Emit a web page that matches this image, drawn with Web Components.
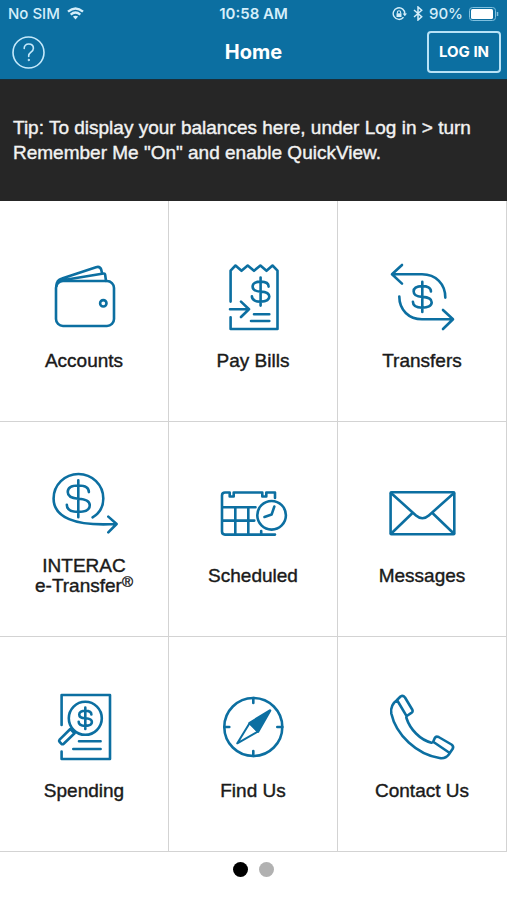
<!DOCTYPE html>
<html lang="en">
<head>
<meta charset="utf-8">
<meta name="viewport" content="width=device-width, initial-scale=1">
<title>Home</title>
<style>
  body { margin: 0; background: #fff; font-family: "Liberation Sans", Arial, sans-serif; color: #1a1a1a; --brand: #0c6fa1; --line: #d3d3d3; }
</style>
</head>
<body>
<bank-app></bank-app>
<script>
const define = (name, html) => {
  const template = document.createElement('template');
  template.innerHTML = html;
  customElements.define(name, class extends HTMLElement {
    constructor() {
      super();
      this.attachShadow({ mode: 'open' }).append(template.content.cloneNode(true));
    }
  });
};

define('status-bar', `
  <style>
    :host { display: grid; grid-template-columns: 1fr auto 1fr; align-items: center; height: 27px; padding: 0 8px; font: 500 15px/18px Inter, sans-serif; color: #d5eefa; }
    div { display: flex; align-items: center; gap: 7px; }
    .end { justify-content: flex-end; gap: 6px; }
    time { font-weight: 600; }
    svg { display: block; fill: none; stroke: currentColor; }
  </style>
  <div><span>No SIM</span>
    <svg width="17" height="13" viewBox="0 0 17 13" stroke-width="2.4" aria-label="Wi-Fi"><path d="M1 4.7Q8.500-1.700 16 4.700M3.700 7.600Q8.500 3.600 13.300 7.600"/><path d="M5.900 9.600Q8.500 7.800 11.100 9.600L8.500 12.500Z" fill="currentColor" stroke="none"/></svg>
  </div>
  <time>10:58 AM</time>
  <div class="end">
    <svg width="15" height="14" viewBox="0 0 15 14" stroke-width="1.400" aria-label="Rotation lock"><path d="M11.500 10.300A5.800 5.800 0 1 1 12.800 7"/><path d="M10.600 6.500h4.400l-2.200 2.800z" fill="currentColor" stroke="none"/><rect x="4.500" y="6.300" width="5" height="3.700" fill="currentColor" stroke="none"/><path d="M5.400 6.500V5.300a1.600 1.600 0 0 1 3.200 0V6.500" stroke-width="1.100"/></svg>
    <svg width="10" height="15" viewBox="0 0 10 15" stroke-width="1.500" aria-label="Bluetooth"><path d="M1 4L8.700 10.700L5 14V1L8.700 4.300L1 11"/></svg>
    <span>90%</span>
    <svg width="30" height="14" viewBox="0 0 30 14" aria-label="Battery"><rect x=".5" y=".5" width="26" height="13" rx="3" stroke="#7fc0df"/><rect x="2" y="2" width="22" height="10" rx="1.500" fill="#fff" stroke="none"/><path d="M28.500 5v4" stroke="#7fc0df" stroke-width="1.500"/></svg>
  </div>`);

define('nav-bar', `
  <style>
    :host { display: grid; grid-template-columns: 1fr auto 1fr; align-items: center; height: 50px; padding: 0 6px 2px; color: #fff; }
    h1 { margin: 0; font: 700 20px/24px Inter, sans-serif; }
    button { background: none; color: inherit; cursor: pointer; padding: 0; }
    .help { width: 33px; height: 33px; margin-left: 6px; border: 0; }
    .help svg { display: block; fill: none; stroke: #c4e9fb; stroke-linecap: round; }
    .login { justify-self: end; width: 74px; height: 42px; border: 2px solid #b8e2f6; border-radius: 4px; font: 700 15px/18px Inter, sans-serif; }
  </style>
  <button class="help" aria-label="Help"><svg width="33" height="33" viewBox="0 0 33 33"><circle cx="16.500" cy="16.500" r="15.500" stroke-width="1.600"/><path d="M12.200 12.500C12 9.800 14 8 16.700 8s4.700 1.700 4.700 4.300c0 4-4.700 3.800-4.700 7.500v.7" stroke-width="1.600"/><circle cx="16.700" cy="24" r=".7" fill="#c4e9fb"/></svg></button>
  <h1>Home</h1>
  <button class="login">LOG IN</button>`);

define('tip-banner', `
  <style>
    :host { display: flex; align-items: center; box-sizing: border-box; min-height: 122px; padding: 0 13px 2px; background: #262626; border-top: 1px solid #182e39; color: #f2f2f2; }
    p { margin: 0; font-size: 19px; line-height: 25px; -webkit-text-stroke: 0.4px; }
  </style>
  <p><slot></slot></p>`);

const dollar = (x, y, s) => `<g transform="translate(${x} ${y}) scale(${s})"><path d="M0-14V14M8-5C8-8.500 4.500-10 0-10S-8-8.500-8-5C-8-1.500-4.500-.2 0 0S8.700 1.500 8.700 5S5 10 0 10S-8.700 8.500-8.700 4.600"/></g>`;

const icons = {
  wallet: `<rect x="12" y="24" width="58" height="45" rx="7"/><circle cx="59.300" cy="46.300" r="3.200"/><path d="M12.500 29C12.500 25 14 22.500 18 21.500L52 10.200Q56 9 57.200 12.500L58 16M17 23.500L59.500 16.500Q61 16.200 61.200 18L62 24"/>`,
  bill: `<path d="M17.600 44.600V13.600L22.500 8.500L28.500 13.800L34.700 8.500L41 13.800L47.400 8.500L53.500 13.800L59.500 8.500L64.500 13.600V72H17.600V60.300M17 52.300H36M28 44.600L36 52.300L28 60M41 57.300H56.300M38 64H56.300"/>${dollar(47.600, 34.600, 1)}`,
  transfer: `<path d="M20 8L10 17.300L20 26.600M10.500 17.300H40C54 17.300 63.300 27 63.300 40.600M17.300 39.600C17.300 53 27 62.300 40 62.300H70.500M61 53L71 62.300L61 72"/>${dollar(40.300, 39.900, 1.080)}`,
  etransfer: `<path d="M48.600 45.300C56 41 59.300 34 59.300 26.500A24.850 24.500 0 1 0 9.600 26.500C9.600 45 30 54.500 72 52M64.300 44.600L72.600 52L64.300 60.300"/>${dollar(34.300, 26.700, 1.320)}`,
  calendar: `<path d="M62 26V20.500H53.300V24.500H49.300V20.500H20.700V24.500H16.700V20.500H12Q9 20.500 9 23.500V59.600Q9 62.600 12 62.600H62M9 35.300H42.500M9 48.600H41.300M22.300 35.300V62.600M35.300 35.300V62.600M48.200 59V62.600"/><circle cx="58.600" cy="43.300" r="14.300"/><path d="M61.300 34.600L58.600 42.600L51.500 45"/>`,
  envelope: `<rect x="8.600" y="20.300" width="63.700" height="42" rx="1"/><path d="M9 21L34 43.500Q40.400 49 46.800 43.500L72 21M30.500 41L9 61.800M50.400 41L72 61.800"/>`,
  spending: `<path d="M17.600 38V8H66V72H17.600V64.600M35 54.300H56.600M29.300 62H56.600"/><circle cx="41.300" cy="31.300" r="16.500"/><path d="M26.300 42L15.600 52.600Q14.600 53.800 15.700 55L17.300 56.700Q18.500 57.800 19.700 56.700L30.600 46.300Z"/>${dollar(41.300, 31.300, .76)}`,
  compass: `<circle cx="40.300" cy="40" r="29"/><path d="M40.300 11V16M40.300 64V69M11.300 40H16.300M64.300 40H69.300"/><path d="M36.700 36L24.300 56.300L45 44.500Z" stroke-width="2"/><path d="M57 23.600L36.700 36L40.800 40.200L45 44.500Z" fill="currentColor"/>`,
  phone: `<path d="M15 13L18.500 9.500Q21 8 23 10.500L30.200 22.500Q31.500 24.800 29 26.200L25.500 28.500Q23.800 29.500 24.600 31.500C28 42 38 53 49.500 55.700Q51 55.900 51.500 54L52.700 51.200Q54 48.800 56.600 50L69.500 57.500Q72 59.200 70.700 61.800L66.800 67.500Q63.500 72 57.500 71C35 67.500 14 48 9.300 26.500Q8 18 15 13L24.600 29.200M51.500 55L67 65.500"/>`
};

customElements.define('line-icon', class extends HTMLElement {
  constructor() { super(); this.attachShadow({ mode: 'open' }); }
  connectedCallback() {
    this.shadowRoot.innerHTML = `
      <style>
        :host { display: block; color: var(--brand); }
        svg { display: block; fill: none; stroke: currentColor; stroke-width: 2.600; stroke-linecap: round; stroke-linejoin: round; }
        path { vector-effect: non-scaling-stroke; }
      </style>
      <svg width="80" height="80" viewBox="0 0 80 80" aria-hidden="true">${icons[this.getAttribute('name')]}</svg>`;
  }
});

customElements.define('menu-tile', class extends HTMLElement {
  constructor() { super(); this.attachShadow({ mode: 'open' }); }
  connectedCallback() {
    this.shadowRoot.innerHTML = `
      <style>
        :host { display: block; border: solid var(--line); border-width: 0 1px 1px 0; }
        a { display: flex; flex-direction: column; align-items: center; height: 100%; box-sizing: border-box; padding: var(--tile-top, 50px) 4px 0; color: inherit; text-decoration: none; }
        span { display: flex; flex-direction: column; justify-content: center; height: 48px; text-align: center; font-size: 19px; line-height: 20px; -webkit-text-stroke: 0.4px; }
      </style>
      <a href="#${this.getAttribute('icon')}"><line-icon name="${this.getAttribute('icon')}"></line-icon><span><slot></slot></span></a>`;
  }
});

define('menu-grid', `
  <style>
    :host { display: grid; grid-template-columns: repeat(3, minmax(0, 1fr)); grid-template-rows: 221px 215px 215px; }
    .first { --tile-top: 56px; }
    sup { font-size: 15px; line-height: 0; vertical-align: 5px; }
    b { display: block; font-weight: inherit; white-space: nowrap; }
  </style>
  <menu-tile class="first" icon="wallet">Accounts</menu-tile>
  <menu-tile class="first" icon="bill">Pay Bills</menu-tile>
  <menu-tile class="first" icon="transfer">Transfers</menu-tile>
  <menu-tile icon="etransfer"><b>INTERAC</b><b>e-Transfer<sup>®</sup></b></menu-tile>
  <menu-tile icon="calendar">Scheduled</menu-tile>
  <menu-tile icon="envelope">Messages</menu-tile>
  <menu-tile icon="spending">Spending</menu-tile>
  <menu-tile icon="compass">Find Us</menu-tile>
  <menu-tile icon="phone">Contact Us</menu-tile>`);

define('page-dots', `
  <style>
    :host { display: flex; justify-content: center; gap: 11px; padding: 10px 0; }
    button { width: 15px; height: 15px; padding: 0; border: 0; border-radius: 50%; background: #b1b1b1; }
    .current { background: #000; }
  </style>
  <button class="current" aria-label="Page 1" aria-current="true"></button><button aria-label="Page 2"></button>`);

define('bank-app', `
  <style>
    :host { display: block; }
    header { background: var(--brand); }
  </style>
  <header><status-bar></status-bar><nav-bar></nav-bar></header>
  <main>
    <tip-banner>Tip: To display your balances here, under Log in &gt; turn Remember Me "On" and enable QuickView.</tip-banner>
    <menu-grid></menu-grid>
  </main>
  <page-dots></page-dots>`);
</script>
</body>
</html>
